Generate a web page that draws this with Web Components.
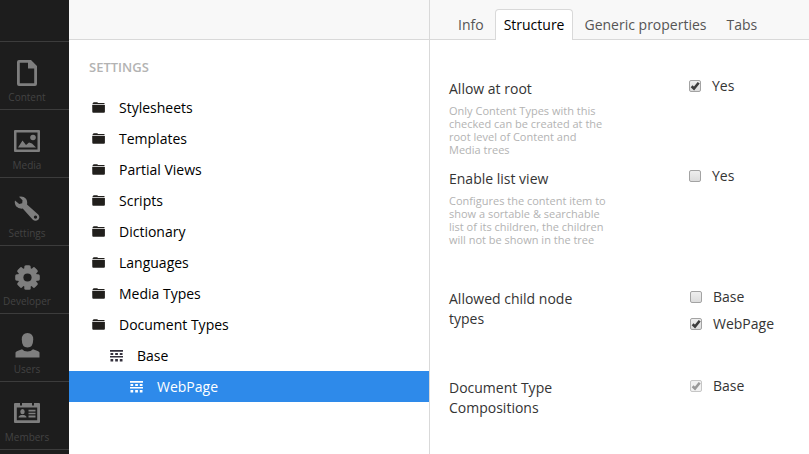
<!DOCTYPE html>
<html lang="en">
<head>
<meta charset="utf-8">
<title>Settings</title>
<style>
html,body{margin:0;height:100%;overflow:hidden;background:#fff}
body{font:14px/20px "Open Sans","Noto Sans",sans-serif;color:#343434}
</style>
</head>
<body>
<settings-app></settings-app>
<script>
const svg = (w, h, body) => `<svg width="${w}" height="${h}" viewBox="0 0 ${w} ${h}" fill="currentColor" style="display:block">${body}</svg>`;
const teeth = [0,45,90,135,180,225,270,315].map(a => `<rect x="9.300" y="0.200" width="6.400" height="8" rx="1.600" transform="rotate(${a} 12.500 12.500)"/>`).join('');
const GLYPHS = {
  content: svg(20, 26, '<path fill-rule="evenodd" d="M2 0h12l6 6v18q0 2-2 2H2q-2 0-2-2V2Q0 0 2 0zM2.800 2.800v20.400h14.400V8.500H11V2.800z"/>'),
  media: svg(26, 22, '<path fill-rule="evenodd" d="M1 0h24q1 0 1 1v20q0 1-1 1H1q-1 0-1-1V1Q0 0 1 0zM2.500 2.500v17h21v-17z"/><circle cx="19" cy="7.500" r="2.800"/><path d="M4 17.500 8.500 10.500 12 15 15 12.500 18 13.500 22 17.500z"/>'),
  settings: svg(26, 26, '<path fill-rule="evenodd" d="M5 .8Q9.500 0 12 2.800Q13.700 5.300 13 8.500L24.200 18.500Q26.300 21 24.500 23.400Q21.500 26 18.600 23.500L8.700 12.600Q4.500 13 2 10.300Q.2 7.500 1 4.500L5.200 8 8.200 7.200 8.500 4.200zM21.500 19.500a1.600 1.600 0 1 0 .01 0z"/>'),
  developer: svg(25, 25, `<mask id="hole"><rect width="25" height="25" fill="white"/><circle cx="12.500" cy="12.500" r="4.100" fill="black"/></mask><g mask="url(#hole)">${teeth}<circle cx="12.500" cy="12.500" r="9.700"/></g>`),
  users: svg(25, 25, '<path d="M12.500 0Q18.200 0 18.200 6.500 18.200 14.500 12.500 14.500 6.800 14.500 6.800 6.500 6.800 0 12.500 0z"/><path d="M.5 24.500V19.500Q1 18 7 16.200Q9 18.500 12.500 18.500T18 16.200Q24 18 24.500 19.500V24.500z"/>'),
  members: svg(26, 20, '<path fill-rule="evenodd" d="M1 0h5v2.500h2V0h10v2.500h2V0h5q1 0 1 1v18q0 1-1 1H1q-1 0-1-1V1Q0 0 1 0zM2.800 4.500v12.700h20.400V4.500z"/><ellipse cx="8.500" cy="8.700" rx="2.200" ry="2.600"/><path d="M4.500 14.500q0-2 3-2.500h2q3 .5 3 2.500zM14.500 6.700h7v1.900h-7zM14.500 9.700h7v1.600h-7zM14.500 12.500h7v1.900h-7z"/>'),
  folder: svg(13, 11, '<path d="M1 1.600V.9Q1 .2 2 .2H5Q5.800 .2 6 1H12.500V2.200H.3V1.600zM.2 3.100H12.900V9.800Q12.900 10.800 12 10.800H1.200Q.3 10.800 .3 9.800z"/>'),
  type: svg(13, 12, '<path d="M0 0h13v1.700H0zM.5 3h2.700v2H.5zM5.200 3h2.700v2H5.200zM9.800 3h2.700v2H9.800zM0 6h13v1.400H0zM.5 9h2.700v2.400H.5zM5.200 9h2.700v2.400H5.200zM9.800 9h2.700v2.400H9.800z"/>'),
};
function define(name, render) {
  customElements.define(name, class extends HTMLElement {
    constructor() {
      super();
      this.attachShadow({mode: 'open'});
    }
    connectedCallback() {
      this.shadowRoot.innerHTML = render(this);
    }
  });
}
define('ui-icon', el => `<style>:host{display:block;flex:none}</style>${GLYPHS[el.getAttribute('name')]}`);

define('nav-item', el => `<style>
:host{display:flex;flex-direction:column;align-items:center;box-sizing:border-box;height:68px;width:83px;margin-left:-15px;border-bottom:1px solid #3c3c3c;color:#7e7e7e}
:host{width:84px}
.pic{height:48px;padding-top:14px;box-sizing:border-box;display:flex;align-items:center}
.label{font-size:10px;line-height:14px;color:#434343;white-space:nowrap}
</style><div class="pic"><ui-icon name="${el.getAttribute('icon')}"></ui-icon></div><div class="label"><slot></slot></div>`);

define('nav-bar', () => `<style>
:host{display:block;background:#1d1d1d;overflow:hidden;height:454px}
.top{height:41px;border-bottom:1px solid #3c3c3c}
</style><div class="top"></div>
<nav-item icon="content">Content</nav-item><nav-item icon="media">Media</nav-item><nav-item icon="settings">Settings</nav-item><nav-item icon="developer">Developer</nav-item><nav-item icon="users">Users</nav-item><nav-item icon="members">Members</nav-item>`);

define('tree-item', el => `<style>
:host{display:flex;align-items:center;height:31px;box-sizing:border-box;padding-left:23px;color:#000}
:host([level="1"]){padding-left:41px}
:host([level="2"]){padding-left:61px}
:host([selected]){background:#2e8aea;color:#fff}
ui-icon{width:13px;margin-right:14px;color:#211f1c}
:host([level]) ui-icon{color:#34303c}
:host([selected]) ui-icon{color:#fff}
</style><ui-icon name="${el.getAttribute('icon') || 'folder'}"></ui-icon><span><slot></slot></span>`);

define('tree-panel', () => `<style>
:host{display:block;border-right:1px solid #d9d9d9}
header{height:39px;background:#f8f8f8;border-bottom:1px solid #d9d9d9}
h5{margin:17px 0 15px 20px;font-size:13px;line-height:20px;font-weight:600;color:#b3b3b3}
</style><header></header><h5>SETTINGS</h5>
<section><slot></slot></section>`);

define('tab-item', () => `<style>
:host{display:block;box-sizing:border-box;height:31px;padding:5px 8px;border:1px solid transparent;border-bottom:0;border-radius:4px 4px 0 0;color:#555;white-space:nowrap;margin-right:2px}
:host([active]){background:#fff;border-color:#d9d9d9;color:#000}
</style><slot></slot>`);

define('tab-bar', () => `<style>
:host{display:flex;height:40px;box-sizing:border-box;padding:9px 0 0 19px;background:linear-gradient(#d9d9d9,#d9d9d9) 0 100%/100% 1px no-repeat #f8f8f8}
</style><slot></slot>`);

define('form-row', el => `<style>
:host{display:grid;grid-template-columns:160px 1fr;column-gap:80px}
p{margin:5px 0 0;font-size:11px;line-height:13px;color:#b3b3b3;white-space:pre-line}
.label{white-space:pre-line}
</style><div><div class="label">${el.getAttribute('label')}</div>${el.hasAttribute('help') ? `<p>${el.getAttribute('help')}</p>` : ''}</div><div><slot></slot></div>`);

define('check-option', el => `<style>
:host{display:flex;align-items:center;height:20px;gap:11px}
.box{width:12px;height:12px;box-sizing:border-box;border:1px solid #a3a3a3;border-radius:2px;background:linear-gradient(#eee,#dcdcdc);display:flex}
svg{display:block;flex:none;overflow:visible}
:host([disabled]) .box{border-color:#c6c6c6;background:#f1f1f1}
</style><span class="box">${el.hasAttribute('checked') ? `<svg width="10" height="10" viewBox="0 0 10 10"><path d="M1.600 5.200 4 7.500 8.700 1.700" fill="none" stroke="${el.hasAttribute('disabled') ? '#999' : '#3d3d3d'}" stroke-width="2.600"/></svg>` : ''}</span><span><slot></slot></span>`);

define('settings-app', () => `<style>
:host{display:grid;grid-template-columns:69px 361px 1fr;height:454px;overflow:hidden}
form-row{margin-left:19px}
.form{padding-top:39px}
.a{height:90px}.b{height:120px}.c{height:89px}
.lift{margin-top:-3px}
.shift{margin:-2px 0 7px 1px}
</style>
<nav-bar></nav-bar>
<tree-panel>
<tree-item>Stylesheets</tree-item><tree-item>Templates</tree-item><tree-item>Partial Views</tree-item><tree-item>Scripts</tree-item><tree-item>Dictionary</tree-item><tree-item>Languages</tree-item><tree-item>Media Types</tree-item><tree-item>Document Types</tree-item><tree-item level="1" icon="type">Base</tree-item><tree-item level="2" icon="type" selected>WebPage</tree-item>
</tree-panel>
<main>
<tab-bar><tab-item>Info</tab-item><tab-item active>Structure</tab-item><tab-item>Generic properties</tab-item><tab-item>Tabs</tab-item></tab-bar>
<div class="form">
<form-row class="a" label="Allow at root" help="Only Content Types with this&#10;checked can be created at the&#10;root level of Content and&#10;Media trees"><check-option class="lift" checked>Yes</check-option></form-row>
<form-row class="b" label="Enable list view" help="Configures the content item to&#10;show a sortable &amp; searchable&#10;list of its children, the children&#10;will not be shown in the tree"><check-option class="lift">Yes</check-option></form-row>
<form-row class="c" label="Allowed child node&#10;types"><check-option class="shift">Base</check-option><check-option class="shift" style="margin-top:0" checked>WebPage</check-option></form-row>
<form-row label="Document Type&#10;Compositions"><check-option class="shift" checked disabled>Base</check-option></form-row>
</div>
</main>`);
</script>
</body>
</html>
